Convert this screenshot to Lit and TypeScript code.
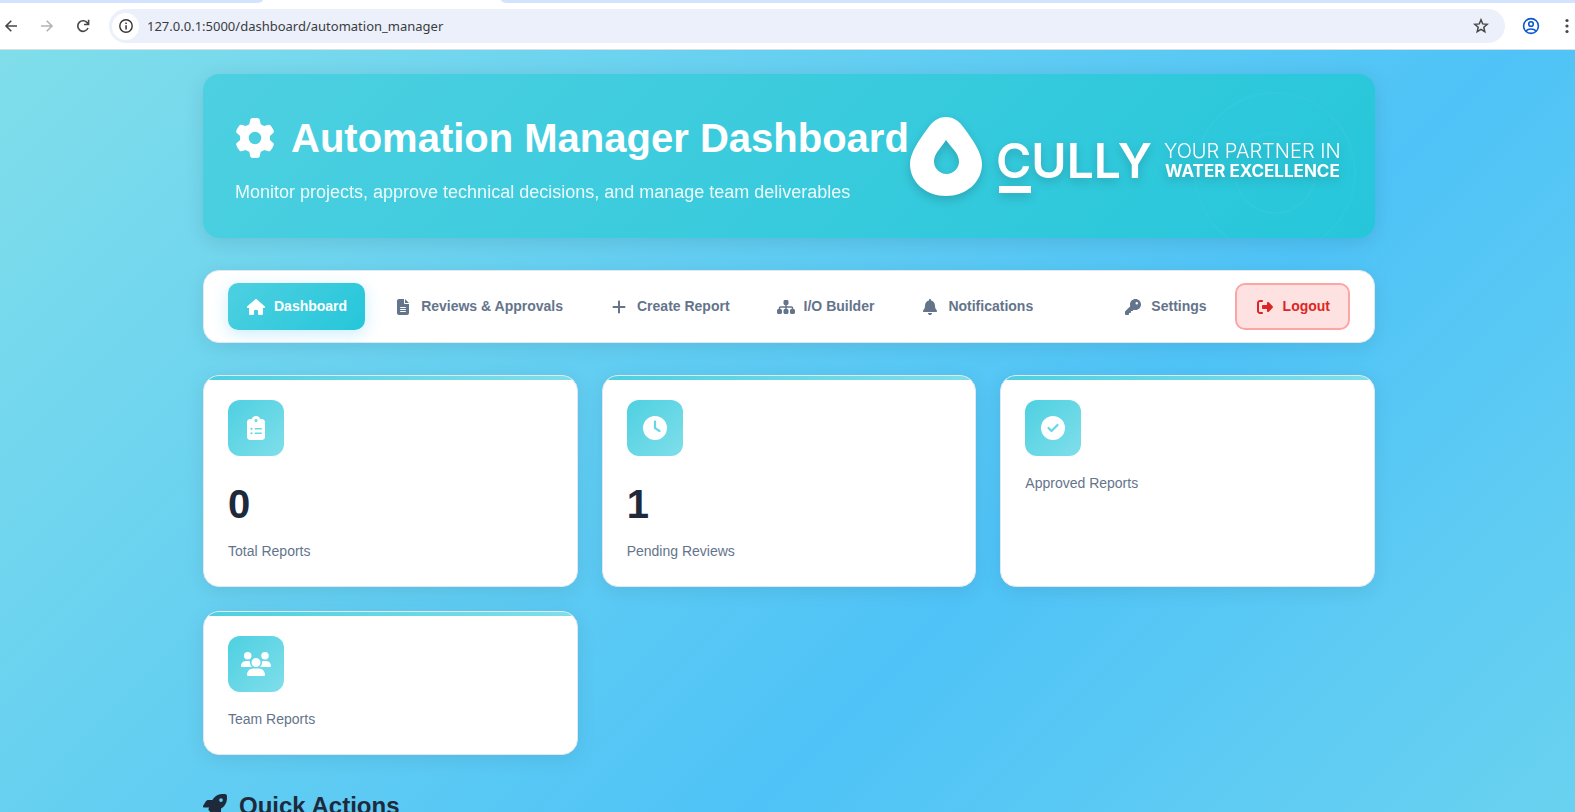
import { LitElement, html, css, svg } from "lit";
import { customElement, property } from "lit/decorators.js";

interface Glyph {
  width: number;
  path: string;
}

const GLYPHS: Record<string, Glyph> = {
  gear: {
    width: 512,
    path: "M495.9 166.6c3.2 8.7 .5 18.4-6.4 24.6l-43.3 39.4c1.1 8.3 1.7 16.8 1.7 25.4s-.6 17.1-1.7 25.4l43.3 39.4c6.9 6.2 9.6 15.9 6.4 24.6c-4.4 11.9-9.7 23.3-15.8 34.3l-4.7 8.1c-6.6 11-14 21.4-22.1 31.2c-5.9 7.2-15.7 9.6-24.5 6.8l-55.7-17.7c-13.4 10.3-28.2 18.9-44 25.4l-12.5 57.1c-2 9.1-9 16.3-18.2 17.8c-13.8 2.3-28 3.5-42.5 3.5s-28.7-1.2-42.5-3.5c-9.2-1.5-16.2-8.7-18.2-17.8l-12.5-57.1c-15.8-6.5-30.6-15.1-44-25.4L83.1 425.9c-8.8 2.8-18.6 .3-24.5-6.8c-8.1-9.8-15.5-20.2-22.1-31.2l-4.7-8.1c-6.1-11-11.4-22.4-15.8-34.3c-3.2-8.7-.5-18.4 6.4-24.6l43.3-39.4C64.6 273.1 64 264.6 64 256s.6-17.1 1.7-25.4L22.4 191.2c-6.9-6.2-9.6-15.9-6.4-24.6c4.4-11.9 9.7-23.3 15.8-34.3l4.7-8.1c6.6-11 14-21.4 22.1-31.2c5.9-7.2 15.7-9.6 24.5-6.8l55.7 17.7c13.4-10.3 28.2-18.9 44-25.4l12.5-57.1c2-9.1 9-16.3 18.2-17.8C227.3 1.2 241.5 0 256 0s28.7 1.2 42.5 3.5c9.2 1.5 16.2 8.7 18.2 17.8l12.5 57.1c15.8 6.5 30.6 15.1 44 25.4l55.7-17.7c8.8-2.8 18.6-.3 24.5 6.8c8.1 9.8 15.5 20.2 22.1 31.2l4.7 8.1c6.1 11 11.4 22.4 15.8 34.3zM256 336a80 80 0 1 0 0-160 80 80 0 1 0 0 160z",
  },
  house: {
    width: 576,
    path: "M575.8 255.5c0 18-15 32.1-32 32.1h-32l.7 160.2c0 2.7-.2 5.4-.5 8.1V472c0 22.1-17.9 40-40 40H456c-1.1 0-2.2 0-3.3-.1c-1.4 .1-2.8 .1-4.2 .1H416 392c-22.1 0-40-17.9-40-40V448 384c0-17.7-14.3-32-32-32H256c-17.7 0-32 14.3-32 32v64 24c0 22.1-17.9 40-40 40H160 128.1c-1.5 0-3-.1-4.5-.2c-1.2 .1-2.4 .2-3.6 .2H104c-22.1 0-40-17.9-40-40V360c0-.9 0-1.9 .1-2.8V287.6H32c-18 0-32-14-32-32.1c0-9 3-17 10-24L266.4 8c7-7 15-8 22-8s15 2 21 7L564.8 231.5c8 7 12 15 11 24z",
  },
  file: {
    width: 384,
    path: "M64 0C28.7 0 0 28.7 0 64V448c0 35.3 28.7 64 64 64H320c35.3 0 64-28.7 64-64V160H256c-17.7 0-32-14.3-32-32V0H64zM256 0V128H384L256 0zM112 256H272c8.8 0 16 7.2 16 16s-7.2 16-16 16H112c-8.8 0-16-7.2-16-16s7.2-16 16-16zm0 64H272c8.8 0 16 7.2 16 16s-7.2 16-16 16H112c-8.8 0-16-7.2-16-16s7.2-16 16-16zm0 64H272c8.8 0 16 7.2 16 16s-7.2 16-16 16H112c-8.8 0-16-7.2-16-16s7.2-16 16-16z",
  },
  plus: {
    width: 448,
    path: "M256 80c0-17.7-14.3-32-32-32s-32 14.3-32 32V224H48c-17.7 0-32 14.3-32 32s14.3 32 32 32H192V432c0 17.7 14.3 32 32 32s32-14.3 32-32V288H400c17.7 0 32-14.3 32-32s-14.3-32-32-32H256V80z",
  },
  sitemap: {
    width: 576,
    path: "M208 80c0-26.5 21.5-48 48-48h64c26.5 0 48 21.5 48 48v64c0 26.5-21.5 48-48 48h-8v40H464c30.9 0 56 25.1 56 56v32h8c26.5 0 48 21.5 48 48v64c0 26.5-21.5 48-48 48H464c-26.5 0-48-21.5-48-48V368c0-26.5 21.5-48 48-48h8V288c0-4.4-3.6-8-8-8H312v40h8c26.5 0 48 21.5 48 48v64c0 26.5-21.5 48-48 48H256c-26.5 0-48-21.5-48-48V368c0-26.5 21.5-48 48-48h8V280H112c-4.4 0-8 3.6-8 8v32h8c26.5 0 48 21.5 48 48v64c0 26.5-21.5 48-48 48H48c-26.5 0-48-21.5-48-48V368c0-26.5 21.5-48 48-48h8V288c0-30.9 25.1-56 56-56H264V192h-8c-26.5 0-48-21.5-48-48V80z",
  },
  bell: {
    width: 448,
    path: "M224 0c-17.7 0-32 14.3-32 32V51.2C119 66 64 130.6 64 208v18.8c0 47-17.3 92.4-48.5 127.6l-7.4 8.3c-8.4 9.4-10.4 22.9-5.3 34.4S19.4 416 32 416H416c12.6 0 24-7.4 29.2-18.9s3.1-25-5.3-34.4l-7.4-8.3C401.3 319.2 384 273.9 384 226.8V208c0-77.4-55-142-128-156.8V32c0-17.7-14.3-32-32-32zm45.3 493.3c12-12 18.7-28.3 18.7-45.3H224 160c0 17 6.7 33.3 18.7 45.3s28.3 18.7 45.3 18.7s33.3-6.7 45.3-18.7z",
  },
  key: {
    width: 512,
    path: "M336 352c97.2 0 176-78.8 176-176S433.2 0 336 0S160 78.8 160 176c0 18.7 2.9 36.8 8.3 53.7L7 391c-4.5 4.5-7 10.6-7 17v80c0 13.3 10.7 24 24 24h80c13.3 0 24-10.7 24-24V448h40c13.3 0 24-10.7 24-24V384h40c6.4 0 12.5-2.5 17-7l33.3-33.3c16.9 5.4 35 8.3 53.7 8.3zM376 96a40 40 0 1 1 0 80 40 40 0 1 1 0-80z",
  },
  exit: {
    width: 512,
    path: "M377.9 105.9L500.7 228.7c7.2 7.2 11.3 17.1 11.3 27.3s-4.1 20.1-11.3 27.3L377.9 406.1c-6.4 6.4-15 9.9-24 9.9c-18.7 0-33.9-15.2-33.9-33.9l0-62.1-128 0c-17.7 0-32-14.3-32-32l0-64c0-17.7 14.3-32 32-32l128 0 0-62.1c0-18.7 15.2-33.9 33.9-33.9c9 0 17.6 3.6 24 9.9zM160 96L96 96c-17.7 0-32 14.3-32 32l0 256c0 17.7 14.3 32 32 32l64 0c17.7 0 32 14.3 32 32s-14.3 32-32 32l-64 0c-53 0-96-43-96-96L0 128C0 75 43 32 96 32l64 0c17.7 0 32 14.3 32 32s-14.3 32-32 32z",
  },
  clipboard: {
    width: 384,
    path: "M192 0c-41.8 0-77.4 26.7-90.5 64H64C28.7 64 0 92.7 0 128V448c0 35.3 28.7 64 64 64H320c35.3 0 64-28.7 64-64V128c0-35.3-28.7-64-64-64H282.5C269.4 26.7 233.8 0 192 0zm0 64a32 32 0 1 1 0 64 32 32 0 1 1 0-64zM72 272a24 24 0 1 1 48 0 24 24 0 1 1 -48 0zm104-16H304c8.8 0 16 7.2 16 16s-7.2 16-16 16H176c-8.8 0-16-7.2-16-16s7.2-16 16-16zM72 368a24 24 0 1 1 48 0 24 24 0 1 1 -48 0zm88 0c0-8.8 7.2-16 16-16H304c8.8 0 16 7.2 16 16s-7.2 16-16 16H176c-8.8 0-16-7.2-16-16z",
  },
  clock: {
    width: 512,
    path: "M256 0a256 256 0 1 1 0 512A256 256 0 1 1 256 0zM232 120V256c0 8 4 15.5 10.7 20l96 64c11 7.4 25.9 4.4 33.3-6.7s4.4-25.9-6.7-33.3L280 243.2V120c0-13.3-10.7-24-24-24s-24 10.7-24 24z",
  },
  check: {
    width: 512,
    path: "M256 512A256 256 0 1 0 256 0a256 256 0 1 0 0 512zM369 209L241 337c-9.4 9.4-24.6 9.4-33.9 0l-64-64c-9.4-9.4-9.4-24.6 0-33.9s24.6-9.4 33.9 0l47 47L335 175c9.4-9.4 24.6-9.4 33.9 0s9.4 24.6 0 33.9z",
  },
  users: {
    width: 640,
    path: "M144 0a80 80 0 1 1 0 160A80 80 0 1 1 144 0zM512 0a80 80 0 1 1 0 160A80 80 0 1 1 512 0zM0 298.7C0 239.8 47.8 192 106.7 192h42.7c15.9 0 31 3.5 44.6 9.7c-1.3 7.2-1.9 14.7-1.9 22.3c0 38.2 16.8 72.5 43.3 96c-.2 0-.4 0-.7 0H21.3C9.6 320 0 310.4 0 298.7zM405.3 320c-.2 0-.4 0-.7 0c26.6-23.5 43.3-57.8 43.3-96c0-7.6-.7-15-1.9-22.3c13.6-6.3 28.7-9.7 44.6-9.7h42.7C592.2 192 640 239.8 640 298.7c0 11.8-9.6 21.3-21.3 21.3H405.3zM224 224a96 96 0 1 1 192 0 96 96 0 1 1 -192 0zM128 485.3C128 411.7 187.7 352 261.3 352H378.7C452.3 352 512 411.7 512 485.3c0 14.7-11.9 26.7-26.7 26.7H154.7c-14.7 0-26.7-11.9-26.7-26.7z",
  },
  rocket: {
    width: 512,
    path: "M156.6 384.9L125.7 354c-8.5-8.5-11.5-20.8-7.7-32.2c3-8.9 7-20.5 11.8-33.8L24 288c-8.6 0-16.6-4.6-20.9-12.1s-4.2-16.7 .2-24.1l52.5-88.5c13-21.9 36.5-35.3 61.9-35.3l82.3 0c2.4-4 4.8-7.7 7.2-11.3C289.1-4.1 411.1-8.1 483.9 5.3c11.6 2.1 20.6 11.2 22.8 22.8c13.4 72.9 9.3 194.8-111.4 276.7c-3.5 2.4-7.3 4.8-11.3 7.2v82.3c0 25.4-13.4 49-35.3 61.9l-88.5 52.5c-7.4 4.4-16.6 4.5-24.1 .2s-12.1-12.2-12.1-20.9V380.8c-14.1 4.9-26.4 8.9-35.7 11.9c-11.2 3.6-23.4 .5-31.8-7.8zM384 168a40 40 0 1 0 0-80 40 40 0 1 0 0 80z",
  },
};

/** A solid glyph, one em high and as wide as its own artwork. */
@customElement("solid-icon")
class SolidIcon extends LitElement {
  @property() name = "gear";

  static styles = css`
    :host {
      display: inline-flex;
      flex: none;
    }
    .glyph {
      display: block;
      height: 1em;
      fill: currentColor;
    }
  `;

  render() {
    const glyph = GLYPHS[this.name];
    return html`<svg class="glyph" viewBox="0 0 ${glyph.width} 512" aria-hidden="true">
      ${svg`<path d=${glyph.path}></path>`}
    </svg>`;
  }
}

@customElement("browser-bar")
class BrowserBar extends LitElement {
  static styles = css`
    :host {
      display: block;
      flex: none;
      background: #fff;
      border-bottom: 1px solid #dcdfe1;
      font-family: "Noto Sans", "Open Sans", sans-serif;
    }
    .tabs {
      display: grid;
      grid-template-columns: 263px 238px 1fr;
      height: 3px;
    }
    .strip {
      background: #d3e3fd;
    }
    .strip.before {
      border-bottom-right-radius: 6px 3px;
    }
    .strip.after {
      border-bottom-left-radius: 6px 3px;
    }
    .row {
      display: flex;
      align-items: center;
      padding: 6px 0;
    }
    .tool {
      display: flex;
      align-items: center;
      justify-content: center;
      width: 36px;
      height: 34px;
      padding: 0;
      border: 0;
      background: none;
      color: #474747;
    }
    .tool.off {
      color: #b3b3b3;
    }
    .tool.account {
      color: #0b57d0;
    }
    .nav {
      display: flex;
      margin-left: -7px;
      margin-right: 8px;
    }
    .address {
      display: flex;
      align-items: center;
      flex: 1;
      min-width: 0;
      height: 34px;
      border-radius: 17px;
      background: #ebf0fa;
      padding: 0 6px 0 3px;
      box-sizing: border-box;
    }
    .info {
      display: flex;
      align-items: center;
      justify-content: center;
      flex: none;
      width: 27px;
      height: 27px;
      padding: 0;
      border: 0;
      border-radius: 50%;
      background: #fff;
      color: #333;
    }
    .url {
      flex: 1;
      min-width: 0;
      margin-left: 8px;
      padding: 0;
      border: 0;
      outline: 0;
      background: none;
      color: #3a3c3f;
      font: 13px/20px "Noto Sans", "Open Sans", sans-serif;
    }
    .side {
      display: flex;
      margin-left: 8px;
      margin-right: -10px;
    }
    .line {
      fill: none;
      stroke: currentColor;
    }
    .solid {
      fill: currentColor;
    }
  `;

  render() {
    return html`
      <div class="tabs">
        <span class="strip before"></span><span></span><span class="strip after"></span>
      </div>
      <div class="row">
        <div class="nav">
          <button class="tool" aria-label="Back">
            <svg class="line" width="14" height="14" stroke-width="1.6"><path d="M13 7H2M7.300 1.700L2 7l5.300 5.300" /></svg>
          </button>
          <button class="tool off" aria-label="Forward">
            <svg class="line" width="14" height="14" stroke-width="1.6"><path d="M1 7h11M6.700 1.700L12 7l-5.300 5.300" /></svg>
          </button>
          <button class="tool" aria-label="Reload">
            <svg class="line" width="14" height="14" stroke-width="1.6"><path d="M12 9a5.300 5.300 0 1 1-.6-5L12.600 5.400M12.600 .8v4.700H8" /></svg>
          </button>
        </div>
        <div class="address">
          <button class="info" aria-label="View site information">
            <svg width="14" height="14"><circle class="line" cx="7" cy="7" r="6.200" stroke-width="1.4" /><path class="solid" d="M6.300 6.200h1.500v4.300H6.300zM6.300 3.500h1.500v1.500H6.300z" /></svg>
          </button>
          <input class="url" type="text" aria-label="Address" value="127.0.0.1:5000/dashboard/automation_manager" />
          <button class="tool" aria-label="Bookmark this tab">
            <svg class="line" width="16" height="16" stroke-width="1.5"><path d="M8 1.800l1.700 4.100 4.500.4-3.400 3 1 4.400L8 11.400l-3.800 2.300 1-4.400-3.400-3 4.500-.4z" /></svg>
          </button>
        </div>
        <div class="side">
          <button class="tool account" aria-label="Profile">
            <svg class="line" width="18" height="18" stroke-width="1.6"><circle cx="9" cy="9" r="7.400" /><circle cx="9" cy="7" r="2.300" /><path d="M3.800 14c1.500-1.500 3.200-2 5.200-2s3.700.5 5.200 2" /></svg>
          </button>
          <button class="tool" aria-label="Menu">
            <svg class="solid" width="4" height="16"><circle cx="2" cy="2.500" r="1.600" /><circle cx="2" cy="8" r="1.600" /><circle cx="2" cy="13.500" r="1.600" /></svg>
          </button>
        </div>
      </div>
    `;
  }
}

@customElement("cully-logo")
class CullyLogo extends LitElement {
  static styles = css`
    :host {
      display: block;
      flex: none;
    }
    .logo {
      display: block;
      overflow: visible;
      fill: #fff;
      filter: drop-shadow(0 4px 5px rgba(0, 0, 0, 0.16));
      font-family: Inter, "Open Sans", sans-serif;
    }
    .name {
      font-size: 48px;
      font-weight: 600;
    }
    .tag {
      font-size: 20px;
      font-weight: 300;
    }
    .tag.strong {
      font-size: 17px;
      font-weight: 700;
    }
  `;

  render() {
    return html`
      <svg class="logo" width="433" height="80" viewBox="0 0 433 80" role="img" aria-label="Cully">
        <path
          fill-rule="evenodd"
          d="M36 1C44 1 49 5 54 12C63 24 72 37 72 48C72 67 55 80 36 80C17 80 0 67 0 48C0 37 9 24 18 12C23 5 28 1 36 1ZM36 24C32 31 24 37 24 45.500a12.500 12.500 0 0 0 25 0C49 37 40.500 31 36 24Z"
        />
        <text class="name" x="86" y="62">CULLY</text>
        <rect x="89" y="70" width="32" height="7" />
        <text class="tag" x="254" y="42">YOUR PARTNER IN</text>
        <text class="tag strong" x="255" y="61">WATER EXCELLENCE</text>
      </svg>
    `;
  }
}

@customElement("stat-card")
class StatCard extends LitElement {
  @property() icon = "clock";
  @property() label = "";
  @property() value = "";

  static styles = css`
    :host {
      display: block;
      position: relative;
      overflow: hidden;
      box-sizing: border-box;
      padding: 24px;
      border: 1px solid #e2e8f0;
      border-radius: 16px;
      background: #fff;
      box-shadow: 0 4px 20px rgba(0, 0, 0, 0.08);
    }
    :host::before {
      content: "";
      position: absolute;
      inset: 0 0 auto;
      height: 4px;
      background: linear-gradient(90deg, #4dd0e1, #80deea);
    }
    .badge {
      display: flex;
      align-items: center;
      justify-content: center;
      width: 56px;
      height: 56px;
      margin-bottom: 16px;
      border-radius: 12px;
      background: linear-gradient(135deg, #4dd0e1, #80deea);
      color: #fff;
      font-size: 24px;
    }
    .value {
      margin-bottom: 4px;
      color: #1e293b;
      font-size: 40px;
      font-weight: 700;
      line-height: 64px;
    }
    .label {
      color: #64748b;
      font-size: 14px;
      line-height: 22px;
    }
  `;

  render() {
    return html`
      <div class="badge"><solid-icon name=${this.icon}></solid-icon></div>
      ${this.value ? html`<div class="value">${this.value}</div>` : null}
      <div class="label">${this.label}</div>
    `;
  }
}

const LINKS = [
  { icon: "house", text: "Dashboard", kind: "active" },
  { icon: "file", text: "Reviews & Approvals", kind: "" },
  { icon: "plus", text: "Create Report", kind: "" },
  { icon: "sitemap", text: "I/O Builder", kind: "" },
  { icon: "bell", text: "Notifications", kind: "" },
  { icon: "key", text: "Settings", kind: "push" },
  { icon: "exit", text: "Logout", kind: "logout" },
];

const STATS = [
  { icon: "clipboard", value: "0", label: "Total Reports" },
  { icon: "clock", value: "1", label: "Pending Reviews" },
  { icon: "check", value: "", label: "Approved Reports" },
  { icon: "users", value: "", label: "Team Reports" },
];

@customElement("app-root")
class AppRoot extends LitElement {
  static styles = css`
    :host {
      display: flex;
      flex-direction: column;
      height: 100vh;
      overflow: hidden;
      background: #fff;
      font-family: "Liberation Sans", Arial, sans-serif;
    }
    .page {
      flex: 1;
      min-height: 0;
      overflow: hidden;
      padding: 24px 24px 0 27px;
      background: linear-gradient(135deg, #80deea 0, #4fc3f7 1068px, #80deea 2136px);
    }
    .column {
      display: flex;
      flex-direction: column;
      gap: 32px;
      max-width: 1172px;
      margin: 0 auto;
    }
    .banner {
      display: flex;
      align-items: center;
      justify-content: space-between;
      position: relative;
      overflow: hidden;
      padding: 32px;
      border-radius: 16px;
      background: linear-gradient(135deg, #4dd0e1, #26c6da);
      box-shadow: 0 4px 20px rgba(0, 0, 0, 0.1);
      color: #fff;
    }
    .ripples {
      position: absolute;
      top: 0;
      right: 0;
      fill: none;
      stroke: #fff;
      stroke-width: 2;
      opacity: 0.03;
    }
    .title {
      display: flex;
      align-items: center;
      gap: 16px;
      margin: 0 0 8px;
      font-size: 40px;
      font-weight: 700;
      line-height: 64px;
      white-space: nowrap;
    }
    .intro {
      margin: 0;
      font-size: 18px;
      line-height: 28px;
      opacity: 0.9;
    }
    .menu {
      display: flex;
      gap: 10px;
      padding: 12px 24px;
      border: 1px solid #e2e8f0;
      border-radius: 16px;
      background: #fff;
      box-shadow: 0 4px 20px rgba(0, 0, 0, 0.08);
    }
    .link {
      display: flex;
      align-items: center;
      gap: 8px;
      padding: 12px 18px;
      border-radius: 10px;
      color: #64748b;
      font-size: 14px;
      font-weight: 700;
      line-height: 23px;
      text-decoration: none;
      white-space: nowrap;
    }
    .slot {
      display: flex;
      justify-content: center;
      width: 20px;
      font-size: 16px;
    }
    .link.active {
      background: linear-gradient(135deg, #4dd0e1, #26c6da);
      box-shadow: 0 4px 16px rgba(79, 195, 247, 0.3);
      color: #fff;
    }
    .link.push {
      margin-left: auto;
    }
    .link.logout {
      padding: 10px 18px;
      border: 2px solid #fca5a5;
      background: #fee2e2;
      color: #dc2626;
    }
    .stats {
      display: grid;
      grid-template-columns: repeat(auto-fill, minmax(280px, 1fr));
      gap: 24px;
    }
    .heading {
      display: flex;
      align-items: center;
      gap: 12px;
      margin: 0;
      color: #1e293b;
      font-size: 24px;
      font-weight: 700;
      line-height: 38px;
    }
    @media (min-width: 1000px) {
      .stats {
        grid-template-columns: repeat(3, 1fr);
      }
    }
  `;

  render() {
    return html`
      <browser-bar></browser-bar>
      <main class="page">
        <div class="column">
          <header class="banner">
            <svg class="ripples" width="200" height="200" aria-hidden="true">
              <circle cx="100" cy="99" r="80" />
              <circle cx="100" cy="99" r="40" />
            </svg>
            <div>
              <h1 class="title"><solid-icon name="gear"></solid-icon>Automation Manager Dashboard</h1>
              <p class="intro">Monitor projects, approve technical decisions, and manage team deliverables</p>
            </div>
            <cully-logo></cully-logo>
          </header>
          <nav class="menu">
            ${LINKS.map(
              (link) => html`<a class="link ${link.kind}" href="#"
                ><span class="slot"><solid-icon name=${link.icon}></solid-icon></span>${link.text}</a
              >`
            )}
          </nav>
          <section class="stats">
            ${STATS.map(
              (stat) => html`<stat-card icon=${stat.icon} value=${stat.value} label=${stat.label}></stat-card>`
            )}
          </section>
          <h2 class="heading"><solid-icon name="rocket"></solid-icon>Quick Actions</h2>
        </div>
      </main>
    `;
  }
}
